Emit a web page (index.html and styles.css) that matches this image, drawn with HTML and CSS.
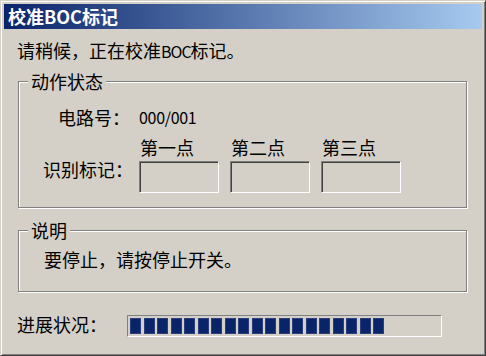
FILE: index.html
```html
<!DOCTYPE html>
<html lang="zh-CN">
<head>
<meta charset="utf-8">
<title>校准BOC标记</title>
<link rel="stylesheet" href="styles.css">
</head>
<body>
<div class="window">
  <div class="titlebar">校准<span class="latin">BOC</span>标记</div>
  <div class="content">
    <p class="msg">请稍候，正在校准<span class="latin">BOC</span>标记。</p>
    <div class="group group-status">
      <span class="legend">动作状态</span>
      <div class="circuit"><span class="circuit-label">电路号：</span><span class="circuit-value">000/001</span></div>
      <div class="marks">
        <span class="marks-label">识别标记：</span>
        <div class="point"><span class="point-label">第一点</span><div class="field"></div></div>
        <div class="point"><span class="point-label">第二点</span><div class="field"></div></div>
        <div class="point"><span class="point-label">第三点</span><div class="field"></div></div>
      </div>
    </div>
    <div class="group group-note">
      <span class="legend">说明</span>
      <p class="note">要停止，请按停止开关。</p>
    </div>
    <div class="progress-row">
      <span class="progress-label">进展状况：</span>
      <div class="progress">
        <span class="block"></span><span class="block"></span><span class="block"></span><span class="block"></span><span class="block"></span>
        <span class="block"></span><span class="block"></span><span class="block"></span><span class="block"></span><span class="block"></span>
        <span class="block"></span><span class="block"></span><span class="block"></span><span class="block"></span><span class="block"></span>
        <span class="block"></span><span class="block"></span><span class="block"></span><span class="block"></span>
      </div>
    </div>
  </div>
</div>
</body>
</html>
```
FILE: styles.css
```css
* { box-sizing: border-box; }
html, body { margin: 0; padding: 0; background: #d4d0c8; }
body {
  font-family: "Noto Sans CJK SC", "Noto Sans", sans-serif;
  font-size: 18px;
  line-height: 18px;
  color: #000;
}
.window {
  width: 486px;
  height: 356px;
  background: #d4d0c8;
  border: 1px solid;
  border-color: #d4d0c8 #404040 #404040 #d4d0c8;
  box-shadow: inset 1px 1px 0 #fff, inset -1px -1px 0 #808080;
  padding: 3px;
  display: flex;
  flex-direction: column;
}
.titlebar {
  height: 25px;
  line-height: 25px;
  padding-left: 4px;
  background: linear-gradient(to right, #0a246a, #a6caf0);
  color: #fff;
  font-weight: bold;
  font-size: 18px;
  white-space: nowrap;
}
.content {
  padding: 12px 13px 0;
}
.msg {
  margin: 0;
  white-space: nowrap;
}
.msg .latin {
  font-size: 16px;
  letter-spacing: -1px;
}
.group {
  position: relative;
  width: 449px;
  margin-left: 1px;
  border: 1px solid #808080;
  box-shadow: inset 1px 1px 0 #fff, 1px 1px 0 #fff;
}
.legend {
  position: absolute;
  top: -10px;
  left: 9px;
  padding: 0 3px;
  background: #d4d0c8;
  white-space: nowrap;
}
.group-status {
  margin-top: 21px;
  height: 127px;
  padding: 26px 0 0;
}
.circuit {
  display: flex;
  align-items: center;
  padding-left: 39px;
  white-space: nowrap;
}
.circuit-label { width: 81px; }
.circuit-value {
  font-size: 16px;
  letter-spacing: -0.3px;
}
.marks {
  display: flex;
  align-items: flex-start;
  margin-top: 12px;
  padding-left: 24px;
}
.marks-label {
  width: 96px;
  margin-top: 22px;
  white-space: nowrap;
}
.point {
  display: flex;
  flex-direction: column;
  width: 80px;
  margin-right: 11px;
}
.point:last-child { margin-right: 0; }
.point-label {
  padding-left: 1px;
  white-space: nowrap;
}
.field {
  margin-top: 5px;
  height: 32px;
  border: 1px solid;
  border-color: #808080 #fff #fff #808080;
  box-shadow: inset 1px 1px 0 #404040, inset -1px -1px 0 #d4d0c8;
}
.group-note {
  margin-top: 22px;
  height: 62px;
  padding: 19px 0 0 25px;
}
.note {
  margin: 0;
  white-space: nowrap;
}
.progress-row {
  display: flex;
  align-items: flex-start;
  margin-top: 23px;
}
.progress-label {
  width: 110px;
  white-space: nowrap;
}
.progress {
  display: flex;
  gap: 2.5px;
  width: 315px;
  height: 22px;
  padding: 2px;
  border: 1px solid;
  border-color: #808080 #fff #fff #808080;
}
.block {
  width: 11px;
  height: 16px;
  background: #0a246a;
  box-shadow: inset 0 0 0 1px #2b3f7c;
}
```
